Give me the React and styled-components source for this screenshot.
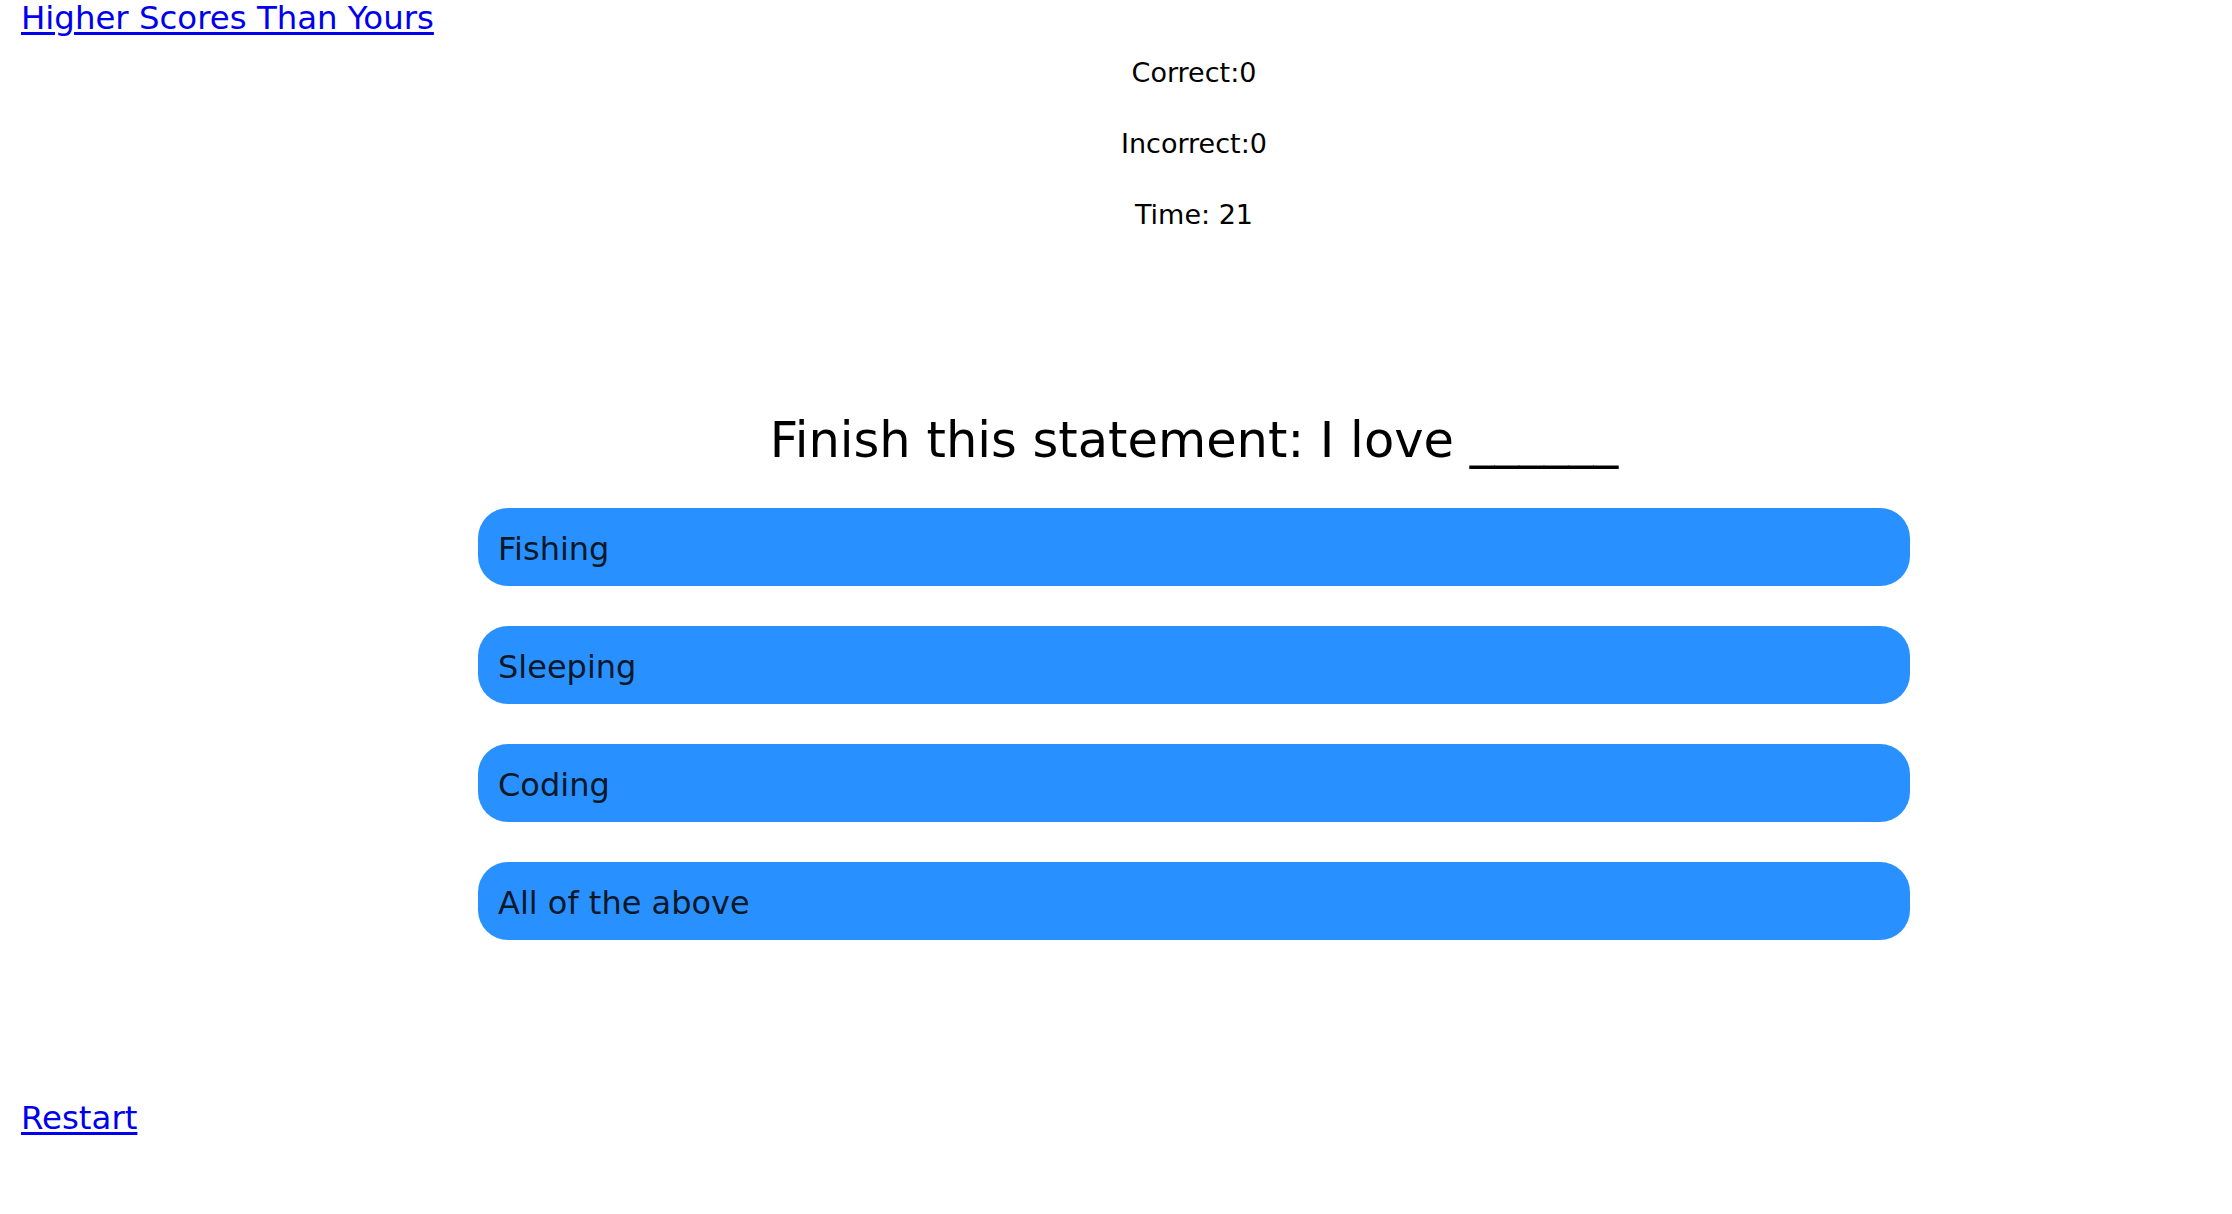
import React from "react";
import styled, { createGlobalStyle } from "styled-components";

const GlobalStyle = createGlobalStyle`
  html, body {
    margin: 0;
    padding: 0;
    background: #ffffff;
  }
  body {
    font-family: "DejaVu Sans", Verdana, sans-serif;
    color: #000000;
  }
`;

const Page = styled.div`
  display: flex;
  flex-direction: column;
  align-items: flex-start;
  padding-left: 21px;
  min-height: 1214px;
  box-sizing: border-box;
`;

const NavLink = styled.a`
  display: block;
  font-size: 32.4px;
  line-height: 37px;
  color: #0000ee;
  text-decoration: underline;
  text-underline-offset: 3px;
  margin-top: ${(p) => p.$top || 0}px;
`;

const Quiz = styled.main`
  display: flex;
  flex-direction: column;
  align-items: center;
  width: 1432px;
  margin-left: 457px;
`;

const Stats = styled.div`
  display: flex;
  flex-direction: column;
  align-items: center;
  gap: 41px;
  margin-top: 21px;
`;

const Stat = styled.div`
  font-size: 27px;
  line-height: 30px;
`;

const Question = styled.h2`
  margin: 182px 0 0;
  font-size: 49.5px;
  font-weight: normal;
  line-height: 57px;
  white-space: pre;
`;

const Choices = styled.div`
  display: flex;
  flex-direction: column;
  gap: 40px;
  width: 100%;
  margin-top: 39px;
`;

const Choice = styled.button`
  display: flex;
  align-items: center;
  height: 78px;
  width: 100%;
  padding: 3px 20px 0;
  border: none;
  border-radius: 30px;
  background: #2991ff;
  color: #0b1828;
  font-family: "DejaVu Sans", Verdana, sans-serif;
  font-size: 32px;
  text-align: left;
  cursor: pointer;
`;

const choices = ["Fishing", "Sleeping", "Coding", "All of the above"];

export default function App() {
  return (
    <>
      <GlobalStyle />
      <Page>
        <NavLink href="#">Higher Scores Than Yours</NavLink>
        <Quiz>
          <Stats>
            <Stat>Correct:0</Stat>
            <Stat>Incorrect:0</Stat>
            <Stat>Time: 21</Stat>
          </Stats>
          <Question>Finish this statement: I love ______</Question>
          <Choices>
            {choices.map((c) => (
              <Choice key={c}>{c}</Choice>
            ))}
          </Choices>
        </Quiz>
        <NavLink href="#" $top={160}>
          Restart
        </NavLink>
      </Page>
    </>
  );
}
